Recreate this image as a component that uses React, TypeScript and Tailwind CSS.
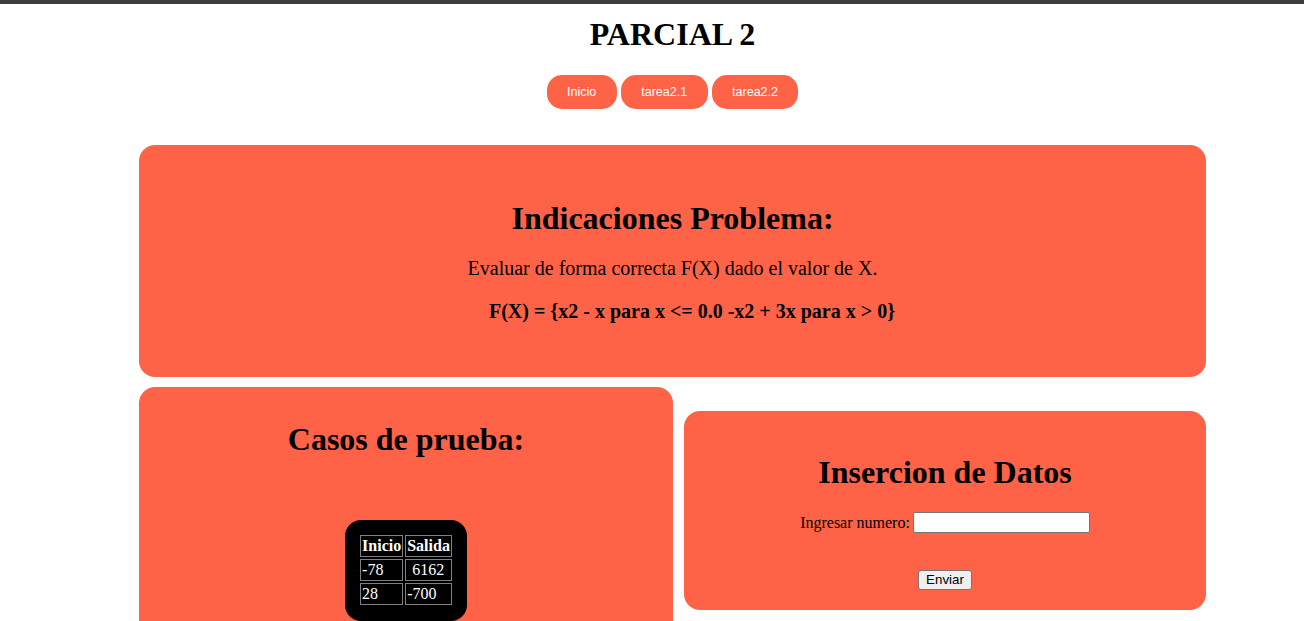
import React from "react";

export default function App() {
  const serif = { fontFamily: '"Liberation Serif", "Times New Roman", serif' };
  const sans = { fontFamily: '"Liberation Sans", Arial, sans-serif' };
  return (
    <div className="min-h-screen bg-white text-black" style={serif}>
      <div className="h-[4px] bg-[#3c3c3c]" />
      <div className="ml-[139px] w-[1067px]">
        <h1 className="mt-[12px] text-center text-[32px] font-bold leading-[37px]">PARCIAL 2</h1>
        <nav className="mt-[22px] flex justify-center gap-[4px]" style={sans}>
          {["Inicio", "tarea2.1", "tarea2.2"].map((t) => (
            <a
              key={t}
              className="flex h-[34px] items-center rounded-[15px] bg-[#ff6347] px-[20.5px] text-[12.5px] text-white"
            >
              {t}
            </a>
          ))}
        </nav>

        <section className="mt-[36px] rounded-[16px] bg-[#ff6347] pb-[54px] pt-[55px] text-center">
          <h2 className="text-[32px] font-bold leading-[37px]">Indicaciones Problema:</h2>
          <p className="mt-[20px] text-[20px] leading-[23px]">
            Evaluar de forma correcta F(X) dado el valor de X.
          </p>
          <p className="mt-[20px] pl-[39px] text-[20px] font-bold leading-[23px]">
            F(X) = {"{"}x2 - x para x &lt;= 0.0 -x2 + 3x para x &gt; 0{"}"}
          </p>
        </section>

        <div className="mt-[10px] flex items-start gap-[11px]">
          <section className="w-[534px] rounded-[16px] bg-[#ff6347] pb-[40px] pt-[34px] text-center">
            <h2 className="text-[32px] font-bold leading-[37px]">Casos de prueba:</h2>
            <div className="mt-[62px] flex justify-center">
              <div className="rounded-[16px] bg-black px-[13px] pb-[14px] pt-[13px]">
                <table className="border-separate border-spacing-[2px] text-[16px] leading-[18px] text-white">
                  <thead>
                    <tr>
                      <th className="border border-[#808080] px-[1px] py-[1px] font-bold">Inicio</th>
                      <th className="border border-[#808080] px-[1px] py-[1px] font-bold">Salida</th>
                    </tr>
                  </thead>
                  <tbody>
                    <tr>
                      <td className="border border-[#808080] px-[1px] py-[1px] text-left">-78</td>
                      <td className="border border-[#808080] py-[1px] pl-[6px] pr-[1px] text-left">6162</td>
                    </tr>
                    <tr>
                      <td className="border border-[#808080] px-[1px] py-[1px] text-left">28</td>
                      <td className="border border-[#808080] px-[1px] py-[1px] text-left">-700</td>
                    </tr>
                  </tbody>
                </table>
              </div>
            </div>
          </section>

          <section className="mt-[24px] w-[522px] rounded-[16px] bg-[#ff6347] pb-[20px] pt-[43px] text-center">
            <h2 className="text-[32px] font-bold leading-[37px]">Insercion de Datos</h2>
            <div className="mt-[21px] flex items-center justify-center gap-[3px] text-[16px]">
              <label className="leading-[21px]">Ingresar numero:</label>
              <input
                type="text"
                className="h-[21px] w-[177px] rounded-[2px] border border-[#767676] bg-white px-[2px] text-[13px] outline-none"
              />
            </div>
            <div className="mt-[37px] flex justify-center">
              <button
                className="h-[20px] w-[54px] rounded-[3px] border border-[#767676] bg-[#efefef] text-[13.33px] leading-[18px] text-black"
                style={sans}
              >
                Enviar
              </button>
            </div>
          </section>
        </div>
      </div>
    </div>
  );
}
